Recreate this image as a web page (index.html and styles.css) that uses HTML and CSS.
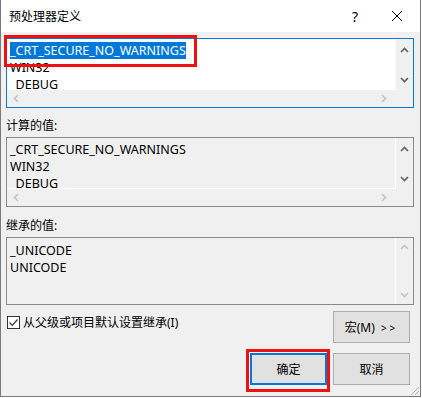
FILE: index.html
```html
<!DOCTYPE html>
<html lang="zh-CN">
<head>
    <meta charset="UTF-8">
    <title>预处理器定义</title>
    <link rel="stylesheet" href="styles.css">
</head>
<body>
    <div class="window">
        <div class="titlebar">
            <span class="title">预处理器定义</span>
            <span class="help">?</span>
            <span class="close">
                <svg width="12" height="12" viewBox="0 0 12 12"><path d="M1 1 L11 11 M11 1 L1 11" stroke="#000" stroke-width="1" fill="none"/></svg>
            </span>
        </div>

        <div class="dialog">
            <div class="listbox focused">
                <div class="text">
                    <div class="line"><span class="sel">_CRT_SECURE_NO_WARNINGS</span></div>
                    <div class="line">WIN32</div>
                    <div class="line">_DEBUG</div>
                </div>
                <div class="vscroll">
                    <svg width="9" height="6" viewBox="0 0 9 6"><polyline points="1,5 4.5,1.5 8,5"/></svg>
                    <svg width="9" height="6" viewBox="0 0 9 6"><polyline points="1,1 4.5,4.5 8,1"/></svg>
                </div>
                <div class="hscroll">
                    <svg class="off" width="6" height="9" viewBox="0 0 6 9"><polyline points="5,1 1.5,4.5 5,8"/></svg>
                    <svg class="off" width="6" height="9" viewBox="0 0 6 9"><polyline points="1,1 4.5,4.5 1,8"/></svg>
                </div>
                <div class="corner"></div>
            </div>

            <div class="label label-first">计算的值:</div>
            <div class="listbox readonly">
                <div class="text">
                    <div class="line">_CRT_SECURE_NO_WARNINGS</div>
                    <div class="line">WIN32</div>
                    <div class="line">_DEBUG</div>
                </div>
                <div class="vscroll">
                    <svg width="9" height="6" viewBox="0 0 9 6"><polyline points="1,5 4.5,1.5 8,5"/></svg>
                    <svg width="9" height="6" viewBox="0 0 9 6"><polyline points="1,1 4.5,4.5 8,1"/></svg>
                </div>
                <div class="hscroll">
                    <svg class="off" width="6" height="9" viewBox="0 0 6 9"><polyline points="5,1 1.5,4.5 5,8"/></svg>
                    <svg class="off" width="6" height="9" viewBox="0 0 6 9"><polyline points="1,1 4.5,4.5 1,8"/></svg>
                </div>
                <div class="corner"></div>
            </div>

            <div class="label">继承的值:</div>
            <div class="listbox readonly noh">
                <div class="text">
                    <div class="line">_UNICODE</div>
                    <div class="line">UNICODE</div>
                </div>
                <div class="vscroll tall">
                    <svg class="off" width="9" height="6" viewBox="0 0 9 6"><polyline points="1,5 4.5,1.5 8,5"/></svg>
                    <svg class="off" width="9" height="6" viewBox="0 0 9 6"><polyline points="1,1 4.5,4.5 8,1"/></svg>
                </div>
            </div>

            <div class="options">
                <label class="check">
                    <span class="box">
                        <svg width="11" height="11" viewBox="0 0 11 11"><polyline points="1.5,5.5 4.2,8.3 9.5,2.5"/></svg>
                    </span>
                    从父级或项目默认设置继承(I)
                </label>
                <button class="btn">宏(M) <span class="arrows">&gt;&gt;</span></button>
            </div>

            <div class="actions">
                <button class="btn default">确定</button>
                <button class="btn">取消</button>
            </div>
        </div>

        <div class="mark mark-list"></div>
        <div class="mark mark-ok"></div>
        <div class="grip"></div>
    </div>
</body>
</html>
```

FILE: styles.css
```css
* {
    margin: 0;
    padding: 0;
    box-sizing: border-box;
}

html,
body {
    background: #fff;
    font-family: 'Noto Sans', 'Noto Sans CJK SC', sans-serif;
    font-size: 12px;
    color: #000;
}

.window {
    position: relative;
    width: 421px;
    height: 397px;
    background: #f0f0f0;
    border: 1px solid #7a7a7a;
    border-top: none;
    overflow: hidden;
}

.titlebar {
    display: flex;
    align-items: center;
    height: 32px;
    background: #fff;
    padding-left: 8px;
}

.title {
    flex: 1;
}

.help {
    width: 46px;
    text-align: center;
    font-size: 14px;
    margin-right: -4px;
}

.close {
    width: 46px;
    display: flex;
    justify-content: center;
}

.dialog {
    display: flex;
    flex-direction: column;
    padding: 6px 6px 0 5px;
}

.listbox {
    display: grid;
    grid-template-columns: 1fr 17px;
    grid-template-rows: 1fr 17px;
    height: 70px;
    border: 1px solid #8a8a8a;
}

.listbox.focused {
    border-color: #0078d7;
}

.listbox.noh {
    grid-template-rows: 1fr;
    height: 68px;
}

.text {
    overflow: hidden;
    padding: 3px 0 0 3px;
    background: #fff;
    font-size: 12.5px;
    line-height: 17px;
}

.readonly .text {
    background: #f0f0f0;
    border-right: 1px solid #fff;
    border-bottom: 1px solid #fff;
}

.readonly.noh .text {
    padding-top: 4px;
    border-bottom: none;
}

.sel {
    background: #0078d7;
    color: #fff;
}

.vscroll {
    display: flex;
    flex-direction: column;
    justify-content: space-between;
    align-items: center;
    padding: 8px 0 7px;
    background: #f0f0f0;
}

.vscroll.tall {
    padding: 6px 0 6px;
}

.hscroll {
    display: flex;
    justify-content: space-between;
    align-items: center;
    padding: 0 9px 0 6px;
    background: #f0f0f0;
}

.corner {
    background: #f0f0f0;
}

svg polyline {
    fill: none;
    stroke: #606060;
    stroke-width: 1.6;
}

svg.off polyline {
    stroke: #c2c2c2;
}

.label {
    line-height: 17px;
    margin: 10px 0 3px;
}

.label-first {
    margin-top: 9px;
}

.options {
    display: flex;
    justify-content: space-between;
    align-items: flex-start;
    margin-top: 6px;
    padding: 0 4px 0 1px;
}

.check {
    display: flex;
    align-items: center;
    gap: 3px;
    margin-top: 3px;
    line-height: 17px;
}

.box {
    display: flex;
    align-items: center;
    justify-content: center;
    width: 13px;
    height: 13px;
    border: 1px solid #333;
    background: #fff;
}

.box polyline {
    stroke: #333;
    stroke-width: 1.2;
}

.btn {
    width: 77px;
    height: 32px;
    background: #e1e1e1;
    border: 1px solid #adadad;
    font-family: inherit;
    font-size: 12px;
    color: #000;
}

.btn .arrows {
    margin-left: 3px;
    font-size: 10px;
    letter-spacing: 3px;
}

.btn.default {
    border: 2px solid #0078d7;
}

.actions {
    display: flex;
    justify-content: flex-end;
    gap: 6px;
    margin-top: 10px;
    padding-right: 4px;
}

.mark {
    position: absolute;
    border: 3px solid #ee1111;
}

.mark-list {
    left: 3px;
    top: 35px;
    width: 193px;
    height: 32px;
}

.mark-ok {
    left: 245px;
    top: 349px;
    width: 84px;
    height: 43px;
}

.grip {
    position: absolute;
    right: 1px;
    bottom: 1px;
    width: 10px;
    height: 10px;
    background: repeating-linear-gradient(135deg, transparent 0 2px, #b0b0b0 2px 3px);
    clip-path: polygon(100% 0, 100% 100%, 0 100%);
}
```
